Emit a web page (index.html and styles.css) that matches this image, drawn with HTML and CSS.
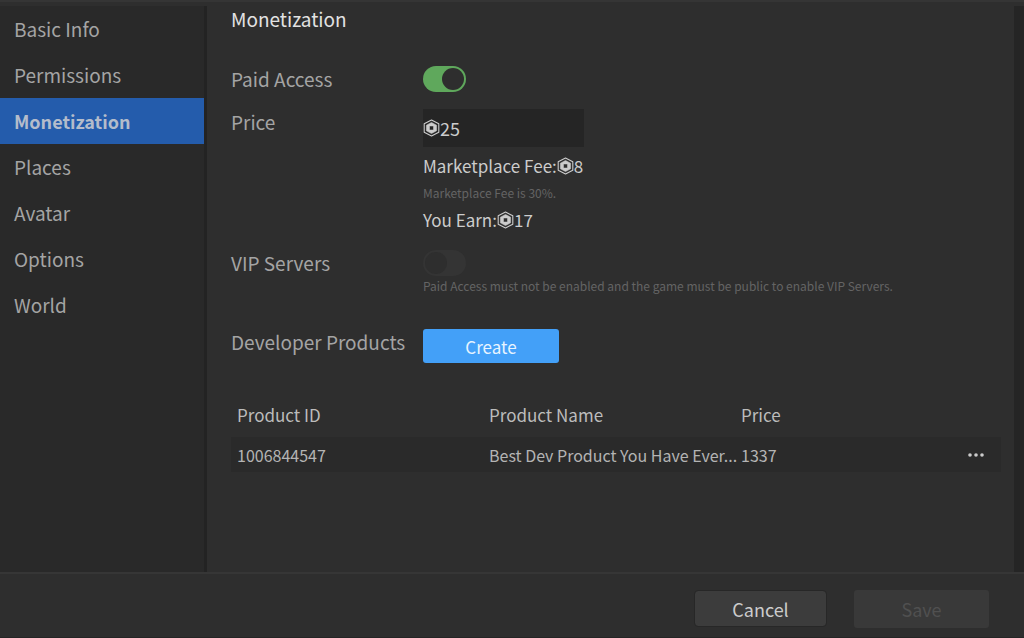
FILE: index.html
```
<!DOCTYPE html>
<html lang="en">
<head>
    <meta charset="UTF-8">
    <meta name="viewport" content="width=device-width, initial-scale=1.0">
    <title>Game Settings</title>
    <link rel="stylesheet" href="styles.css">
</head>
<body>
    <!-- Robux icon, reused by every amount -->
    <svg class="sprite" aria-hidden="true">
        <symbol id="robux" viewBox="0 0 17 18">
            <path d="M8.5 1 L15.8 4.8 V13.2 L8.5 17 L1.2 13.2 V4.8 Z" fill="none" stroke="currentColor" stroke-width="1.1" stroke-linejoin="round"/>
            <path d="M8.5 3.4 L13.6 6.2 V11.8 L8.5 14.6 L3.4 11.8 V6.2 Z M6.5 7 V11 H10.5 V7 Z" fill="currentColor" fill-rule="evenodd" stroke="currentColor" stroke-width="0.5" stroke-linejoin="round"/>
        </symbol>
    </svg>

    <div class="main">
        <nav class="menu">
            <a href="#basic-info">Basic Info</a>
            <a href="#permissions">Permissions</a>
            <a href="#monetization" class="active">Monetization</a>
            <a href="#places">Places</a>
            <a href="#avatar">Avatar</a>
            <a href="#options">Options</a>
            <a href="#world">World</a>
        </nav>

        <main class="content">
            <h1>Monetization</h1>

            <form id="settings-form" class="settings-form">
                <label for="paid-access">Paid Access</label>
                <div class="field">
                    <input type="checkbox" id="paid-access" class="toggle" checked>
                </div>

                <label for="price">Price</label>
                <div class="field price-field">
                    <div class="price-box">
                        <svg class="robux"><use href="#robux"/></svg>
                        <input type="text" id="price" value="25">
                    </div>
                    <p class="amount">Marketplace Fee:<svg class="robux"><use href="#robux"/></svg>8</p>
                    <p class="note">Marketplace Fee is 30%.</p>
                    <p class="amount">You Earn:<svg class="robux"><use href="#robux"/></svg>17</p>
                </div>

                <label for="vip-servers">VIP Servers</label>
                <div class="field vip-field">
                    <input type="checkbox" id="vip-servers" class="toggle" disabled>
                    <p class="note">Paid Access must not be enabled and the game must be public to enable VIP Servers.</p>
                </div>

                <label for="create" class="products-row">Developer Products</label>
                <div class="field products-row">
                    <button type="button" id="create" class="create">Create</button>
                </div>
            </form>

            <table class="products">
                <thead>
                    <tr>
                        <th class="wide">Product ID</th>
                        <th class="wide">Product Name</th>
                        <th>Price</th>
                        <th class="actions"></th>
                    </tr>
                </thead>
                <tbody>
                    <tr>
                        <td>1006844547</td>
                        <td>Best Dev Product You Have Ever...</td>
                        <td>1337</td>
                        <td class="actions">
                            <button type="button" class="more" aria-label="More">
                                <svg viewBox="0 0 16 4"><circle cx="2" cy="2" r="1.8"/><circle cx="8" cy="2" r="1.8"/><circle cx="14" cy="2" r="1.8"/></svg>
                            </button>
                        </td>
                    </tr>
                </tbody>
            </table>
        </main>

        <div class="scroll-track"></div>
    </div>

    <footer class="footer">
        <button type="button" class="cancel">Cancel</button>
        <button type="submit" form="settings-form" class="save" disabled>Save</button>
    </footer>
</body>
</html>
```

FILE: styles.css
```
* {
    box-sizing: border-box;
}

body {
    font-family: "Noto Sans CJK SC", "Noto Sans", sans-serif;
    font-size: 19px;
    background-color: #2e2e2e;
    color: #cccccc;
    margin: 0;
    min-height: 100vh;
    display: flex;
    flex-direction: column;
    border-top: 2px solid #353535;
    border-bottom: 1px solid #252525;
}

h1, p {
    margin: 0;
    font-weight: normal;
}

button, input {
    font-family: inherit;
    font-size: 18px;
    color: inherit;
    border: none;
    margin: 0;
    padding: 0;
}

.sprite {
    display: none;
}

.main {
    flex: 1;
    display: flex;
    padding-top: 4px;
}

/* Left menu */
.menu {
    width: 207px;
    flex-shrink: 0;
    background-color: #292929;
    border-right: 3px solid #232323;
}

.menu a {
    display: block;
    height: 46px;
    line-height: 46px;
    padding-left: 14px;
    color: #a4a4a4;
    text-decoration: none;
}

.menu a.active {
    background-color: #245cac;
    color: #b4bccb;
    font-size: 18px;
    font-weight: bold;
}

/* Settings */
.content {
    flex: 1;
    min-width: 0;
    padding: 0 13px 0 24px;
}

h1 {
    font-size: 19px;
    line-height: 26px;
    color: #e2e2e2;
}

.settings-form {
    display: grid;
    grid-template-columns: 192px 1fr;
    grid-template-rows: 27px;
    row-gap: 16px;
    margin-top: 34px;
}

.settings-form label {
    line-height: 25px;
    color: #a4a4a4;
}

.field {
    display: flex;
    flex-direction: column;
    align-items: flex-start;
}

.price-field {
    gap: 7px;
    padding-bottom: 2px;
}

.vip-field {
    gap: 2px;
}

.products-row {
    margin-top: 19px;
}

.toggle {
    appearance: none;
    display: flex;
    width: 43px;
    height: 26px;
    padding: 2px;
    border-radius: 13px;
    background-color: #5fa85c;
    justify-content: flex-end;
}

.toggle::before {
    content: "";
    width: 22px;
    height: 22px;
    border-radius: 50%;
    background-color: #2e2e2e;
}

.toggle:disabled {
    background-color: #343434;
    justify-content: flex-start;
}

.price-box {
    display: flex;
    align-items: center;
    width: 161px;
    height: 38px;
    background-color: #252525;
}

.price-box input {
    flex: 1;
    min-width: 0;
    background: none;
}

.robux {
    width: 17px;
    height: 18px;
    flex-shrink: 0;
}

.amount {
    display: flex;
    align-items: center;
    font-size: 17px;
    line-height: 24px;
}

.note {
    font-size: 12px;
    line-height: 16px;
    color: #646464;
}

.create {
    width: 136px;
    height: 34px;
    border-radius: 3px;
    background-color: #43a0f8;
    color: #e8f4ff;
    font-size: 17px;
}

/* Developer products */
.products {
    width: 100%;
    margin-top: 30px;
    table-layout: fixed;
    border-collapse: collapse;
}

.products th {
    height: 44px;
    font-size: 17px;
    font-weight: normal;
    color: #bcbcbc;
}

.products td {
    height: 35px;
    font-size: 16px;
    background-color: #2a2a2a;
    color: #b4b4b4;
    white-space: nowrap;
}

.products th, .products td {
    padding: 0 0 0 6px;
    line-height: 24px;
    text-align: left;
}

.products .wide {
    width: 252px;
}

.products .actions {
    width: 40px;
    padding: 0 17px 0 0;
}

.more {
    display: flex;
    margin-left: auto;
    background: none;
}

.more svg {
    width: 16px;
    height: 4px;
    fill: #cccccc;
}

.scroll-track {
    width: 10px;
    background-color: #252525;
}

/* Bottom bar */
.footer {
    display: flex;
    align-items: center;
    justify-content: flex-end;
    gap: 28px;
    height: 65px;
    padding: 6px 35px 0 0;
    border-top: 2px solid #363636;
}

.footer button {
    border-radius: 3px;
    background-color: #3c3c3c;
}

.cancel {
    width: 131px;
    height: 35px;
    outline: 1px solid #272727;
}

.footer .save {
    width: 135px;
    height: 38px;
    background-color: #393939;
    color: #505050;
}
```
